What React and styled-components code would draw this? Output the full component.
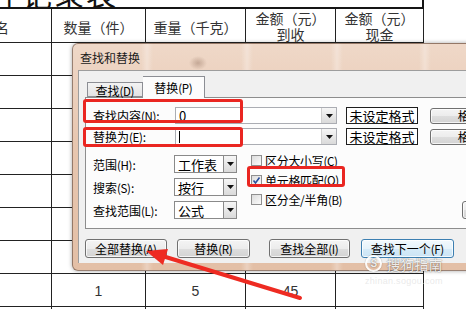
import React from 'react';
import styled, { createGlobalStyle } from 'styled-components';

const Global = createGlobalStyle`
  html, body { margin: 0; padding: 0; background: #fff; }
  body { font-family: "Noto Sans CJK SC", "Noto Sans", sans-serif; }
`;

const Page = styled.div`
  position: relative;
  width: 466px;
  height: 309px;
  overflow: hidden;
  background: #fff;
`;

/* ---------- spreadsheet ---------- */
const Sheet = styled.div`
  display: grid;
  grid-template-columns: 52px 94px 100px 90px 88px;
  grid-template-rows: 9px 34px;
  grid-auto-rows: 33px;
  width: 424px;
  color: #333;
  font-size: 14px;
`;

const TitleCell = styled.div`
  grid-column: 1 / -1;
  box-sizing: border-box;
  border-bottom: 2px solid #151515;
  border-right: 2px solid #151515;
  overflow: hidden;
`;

const TitleText = styled.div`
  font-size: 30px;
  line-height: 30px;
  letter-spacing: 2px;
  margin: -22px 0 0 -10px;
  white-space: nowrap;
  color: #111;
`;

const Cell = styled.div`
  box-sizing: border-box;
  border-right: 1px solid #222;
  border-bottom: 1px solid #222;
  display: flex;
  flex-direction: column;
  align-items: ${p => (p.$left ? 'flex-start' : 'center')};
  justify-content: center;
  white-space: nowrap;
  overflow: hidden;
`;

const HeadCell = styled(Cell)`
  line-height: 16px;
  padding-top: ${p => (p.$two ? 0 : 3)}px;
  font-family: "Noto Sans CJK SC", sans-serif;
`;

const DataCell = styled(Cell)`
  padding-top: 2px;
  font-family: "Liberation Sans", Arial, sans-serif;
`;

const Clip = styled.span`
  margin-left: -19px;
`;

/* ---------- dialog ---------- */
const Dialog = styled.div`
  position: absolute;
  left: 72px;
  top: 43px;
  width: 450px;
  height: 228px;
  box-sizing: border-box;
  padding: 0 0 7px 5px;
  border: 1px solid rgba(95, 72, 60, 0.6);
  border-radius: 6px;
  box-shadow: 0 0 4px rgba(0, 0, 0, 0.35);
  background:
    radial-gradient(ellipse 9px 7px at 125px 19px, rgba(120, 85, 65, 0.35), transparent),
    linear-gradient(90deg,
      transparent 68px, rgba(255, 255, 255, 0.28) 74px, transparent 80px,
      transparent 168px, rgba(255, 255, 255, 0.28) 174px, transparent 180px,
      transparent 258px, rgba(255, 255, 255, 0.28) 264px, transparent 270px,
      transparent 346px, rgba(255, 255, 255, 0.28) 352px, transparent 358px),
    linear-gradient(180deg, #efd8c8 0%, #e7c6af 45%, #e3bfa6 100%);
  display: flex;
  flex-direction: column;
  font-family: "Noto Sans CJK SC", sans-serif;
  font-size: 12px;
  color: #000;
`;

const TitleBar = styled.div`
  height: 26px;
  display: flex;
  align-items: center;
  padding-left: 2px;
  padding-top: 1px;
  box-sizing: border-box;
  color: #1a1a1a;
`;

const Client = styled.div`
  flex: 1;
  background: #f0f0f0;
  border-top: 1px solid #9d9d9d;
  border-left: 1px solid #9d9d9d;
  display: flex;
  flex-direction: column;
`;

const TabStrip = styled.div`
  display: flex;
  align-items: flex-end;
  height: 21px;
  margin-top: 5px;
  padding-left: 8px;
  position: relative;
  z-index: 1;
`;

const Tab = styled.div`
  box-sizing: border-box;
  height: ${p => (p.$active ? 22 : 15)}px;
  width: ${p => (p.$active ? 62 : 56)}px;
  margin-bottom: ${p => (p.$active ? -1 : 0)}px;
  border: 1px solid #8c8e94;
  border-bottom: ${p => (p.$active ? 'none' : '1px solid #8c8e94')};
  border-left: ${p => (p.$active ? 'none' : '1px solid #8c8e94')};
  background: ${p => (p.$active ? '#fcfcfc' : 'linear-gradient(#f3f3f3, #e3e3e3)')};
  display: flex;
  align-items: center;
  justify-content: center;
  padding-top: ${p => (p.$active ? 0 : 2)}px;
  font-size: 12px;
  line-height: 12px;
  white-space: nowrap;
`;

const Key = styled.span`
  font-size: 11.5px;
  letter-spacing: -0.4px;
  margin-right: 0.4px;
`;

const Panel = styled.div`
  margin-left: 6px;
  height: 132px;
  box-sizing: border-box;
  border: 1px solid #8d8d8d;
  border-right: none;
  background: #fcfcfc;
  padding: 9px 0 0 7px;
`;

const FieldRow = styled.div`
  display: flex;
  align-items: center;
  height: 17px;
  margin-top: ${p => p.$mt || 0}px;
`;

const Label = styled.div`
  width: ${p => p.$w}px;
  flex: none;
  white-space: nowrap;
`;

const Combo = styled.div`
  box-sizing: border-box;
  width: ${p => p.$w}px;
  height: ${p => p.$h}px;
  border: 1px solid ${p => (p.$dark ? '#8a8a8a' : '#abadb3')};
  background: #fff;
  display: flex;
  align-items: center;
  padding-left: 3px;
  font-size: 13px;
  flex: none;
`;

const ComboValue = styled.div`
  flex: 1;
  display: flex;
  align-items: center;
  white-space: nowrap;
`;

const Caret = styled.span`
  display: inline-block;
  width: 1px;
  height: 12px;
  background: #000;
`;

const ArrowBtn = styled.div`
  box-sizing: border-box;
  width: ${p => p.$w}px;
  height: 100%;
  border-left: 1px solid ${p => (p.$dark ? '#8a8a8a' : '#d0d0d0')};
  background: linear-gradient(#f6f6f6, #dadada);
  display: flex;
  align-items: center;
  justify-content: center;
`;

const FormatBox = styled.div`
  box-sizing: border-box;
  margin-left: 9px;
  width: 72px;
  height: 17px;
  border: 1px solid #1e1e1e;
  background: #fff;
  display: flex;
  align-items: center;
  justify-content: center;
  font-size: 13px;
  flex: none;
`;

const Btn = styled.div`
  box-sizing: border-box;
  flex: none;
  width: ${p => p.$w}px;
  height: ${p => p.$h || 19}px;
  margin-left: ${p => p.$ml || 0}px;
  border: 1px solid ${p => (p.$default ? '#3c7fb1' : '#707070')};
  border-radius: 3px;
  background: ${p =>
    p.$default
      ? 'linear-gradient(#f2f9fd 0%, #e6f3fb 50%, #d6ebf8 51%, #cbe4f5 100%)'
      : 'linear-gradient(#f4f4f4 0%, #ececec 50%, #dedede 51%, #d3d3d3 100%)'};
  box-shadow: inset 0 0 0 1px rgba(255, 255, 255, 0.75);
  display: flex;
  align-items: center;
  justify-content: center;
  font-size: 12px;
  white-space: nowrap;
`;

const Options = styled.div`
  display: flex;
  margin-top: 10px;
`;

const SelectCol = styled.div`
  display: flex;
  flex-direction: column;
  gap: 5px;
`;

const SelectRow = styled.div`
  display: flex;
  align-items: center;
  height: 18px;
`;

const CheckCol = styled.div`
  flex: 0 0 211px;
  margin-left: 14px;
  margin-top: -4px;
  display: flex;
  flex-direction: column;
`;

const CheckRow = styled.div`
  display: flex;
  align-items: center;
  height: 19.5px;
  white-space: nowrap;
  letter-spacing: -0.3px;
`;

const Box = styled.div`
  box-sizing: border-box;
  width: 11px;
  height: 11px;
  border: 1px solid #8f8f8f;
  background: linear-gradient(135deg, #dcdcdc, #fbfbfb);
  margin-right: 3px;
  position: relative;
  flex: none;
`;

const OptionsBtnWrap = styled.div`
  align-self: flex-end;
`;

const ButtonRow = styled.div`
  display: flex;
  margin-top: 10px;
  padding-left: 6px;
`;

/* ---------- annotations ---------- */
const RedBox = styled.div`
  position: absolute;
  box-sizing: border-box;
  left: ${p => p.$x}px;
  top: ${p => p.$y}px;
  width: ${p => p.$w}px;
  height: ${p => p.$h}px;
  border: 3px solid #ea2621;
  border-radius: 3px;
  pointer-events: none;
`;

const Overlay = styled.svg`
  position: absolute;
  left: 0;
  top: 0;
  pointer-events: none;
`;

const Watermark = styled.div`
  position: absolute;
  left: 365px;
  top: 255px;
  display: flex;
  flex-direction: column;
  align-items: center;
  pointer-events: none;
`;

const MarkLine = styled.div`
  display: flex;
  align-items: center;
  gap: 4px;
  color: rgba(255, 255, 255, 0.9);
  font-size: 14px;
  line-height: 16px;
  text-shadow: 0 0 1px rgba(0, 0, 0, 0.45), 0 0 2px rgba(0, 0, 0, 0.25);
`;

const Logo = styled.div`
  width: 13px;
  height: 13px;
  border-radius: 50%;
  border: 2px solid rgba(255, 255, 255, 0.9);
  box-shadow: 0 0 1px rgba(0, 0, 0, 0.5);
  display: flex;
  align-items: center;
  justify-content: center;
  font-family: "Liberation Sans", sans-serif;
  font-weight: bold;
  font-size: 10px;
  line-height: 10px;
`;

const MarkSub = styled.div`
  margin-top: 4px;
  font-family: "Liberation Sans", sans-serif;
  font-size: 9px;
  letter-spacing: 0.3px;
  color: rgba(225, 225, 225, 0.7);
`;

const Tri = () => (
  <svg width="7" height="4" viewBox="0 0 7 4">
    <polygon points="0,0 7,0 3.5,4" fill="#111" />
  </svg>
);

const Check = () => (
  <svg width="11" height="11" viewBox="0 0 11 11" style={{ position: 'absolute', left: -1, top: -1 }}>
    <path d="M2.5 5.5 L4.5 8 L8.5 2.5" stroke="#2a4f9c" strokeWidth="1.6" fill="none" />
  </svg>
);

const header = ['名', '数量（件）', '重量（千克）', ['金额（元）', '到收'], ['金额（元）', '现金']];
const rows = Array.from({ length: 9 }, (_, i) => (i === 7 ? ['', '1', '5', '45', ''] : ['', '', '', '', '']));

const L = ({ t, k, tail = '' }) => (
  <>
    {t}
    <Key>({k})</Key>
    {tail}
  </>
);

export default function App() {
  return (
    <Page>
      <Global />
      <Sheet>
        <TitleCell>
          <TitleText>件记录表</TitleText>
        </TitleCell>
        {header.map((h, i) => (
          <HeadCell key={i} $left={i === 0} $two={Array.isArray(h)}>
            {i === 0 ? <Clip>品名</Clip> : Array.isArray(h) ? h.map(t => <span key={t}>{t}</span>) : h}
          </HeadCell>
        ))}
        {rows.map((r, ri) => r.map((c, ci) => <DataCell key={ri + '-' + ci}>{c}</DataCell>))}
      </Sheet>

      <Dialog>
        <TitleBar>查找和替换</TitleBar>
        <Client>
          <TabStrip>
            <Tab><L t="查找" k="D" /></Tab>
            <Tab $active><L t="替换" k="P" /></Tab>
          </TabStrip>
          <Panel>
            <FieldRow>
              <Label $w={82}><L t="查找内容" k="N" tail=":" /></Label>
              <Combo $w={162} $h={17}>
                <ComboValue>0</ComboValue>
                <ArrowBtn $w={15}><Tri /></ArrowBtn>
              </Combo>
              <FormatBox>未设定格式</FormatBox>
              <Btn $w={106} $h={16} $ml={12}><L t="格式" k="M" tail="..." /></Btn>
            </FieldRow>
            <FieldRow $mt={4}>
              <Label $w={82}><L t="替换为" k="E" tail=":" /></Label>
              <Combo $w={162} $h={17}>
                <ComboValue><Caret /></ComboValue>
                <ArrowBtn $w={15}><Tri /></ArrowBtn>
              </Combo>
              <FormatBox>未设定格式</FormatBox>
              <Btn $w={106} $h={16} $ml={12}><L t="格式" k="M" tail="..." /></Btn>
            </FieldRow>
            <Options>
              <SelectCol>
                {[['范围', 'H', '工作表'], ['搜索', 'S', '按行'], ['查找范围', 'L', '公式']].map(([l, k, v]) => (
                  <SelectRow key={l}>
                    <Label $w={81}><L t={l} k={k} tail=":" /></Label>
                    <Combo $w={63} $h={18} $dark>
                      <ComboValue>{v}</ComboValue>
                      <ArrowBtn $w={13} $dark><Tri /></ArrowBtn>
                    </Combo>
                  </SelectRow>
                ))}
              </SelectCol>
              <CheckCol>
                <CheckRow><Box /><L t="区分大小写" k="C" /></CheckRow>
                <CheckRow><Box><Check /></Box><L t="单元格匹配" k="O" /></CheckRow>
                <CheckRow><Box /><L t="区分全/半角" k="B" /></CheckRow>
              </CheckCol>
              <OptionsBtnWrap>
                <Btn $w={80} $h={18}><L t="选项" k="T" tail=" <<" /></Btn>
              </OptionsBtnWrap>
            </Options>
          </Panel>
          <ButtonRow>
            <Btn $w={82}><L t="全部替换" k="A" /></Btn>
            <Btn $w={73} $ml={10}><L t="替换" k="R" /></Btn>
            <Btn $w={81} $ml={19}><L t="查找全部" k="I" /></Btn>
            <Btn $w={93} $ml={11} $default><L t="查找下一个" k="F" /></Btn>
          </ButtonRow>
        </Client>
      </Dialog>

      <RedBox $x={83} $y={99} $w={160} $h={24} />
      <RedBox $x={83} $y={127} $w={160} $h={20} />
      <RedBox $x={247} $y={166} $w={98} $h={21} />

      <Overlay width="466" height="309" viewBox="0 0 466 309">
        <line x1="164" y1="256.5" x2="300" y2="298" stroke="#ee2b22" strokeWidth="4" strokeLinecap="round" />
        <polygon points="146,251 168,249 163,265" fill="#ee2b22" />
      </Overlay>

      <Watermark>
        <MarkLine>
          <Logo>S</Logo>
          <span>搜狗指南</span>
        </MarkLine>
        <MarkSub>zhinan.sogou.com</MarkSub>
      </Watermark>
    </Page>
  );
}
